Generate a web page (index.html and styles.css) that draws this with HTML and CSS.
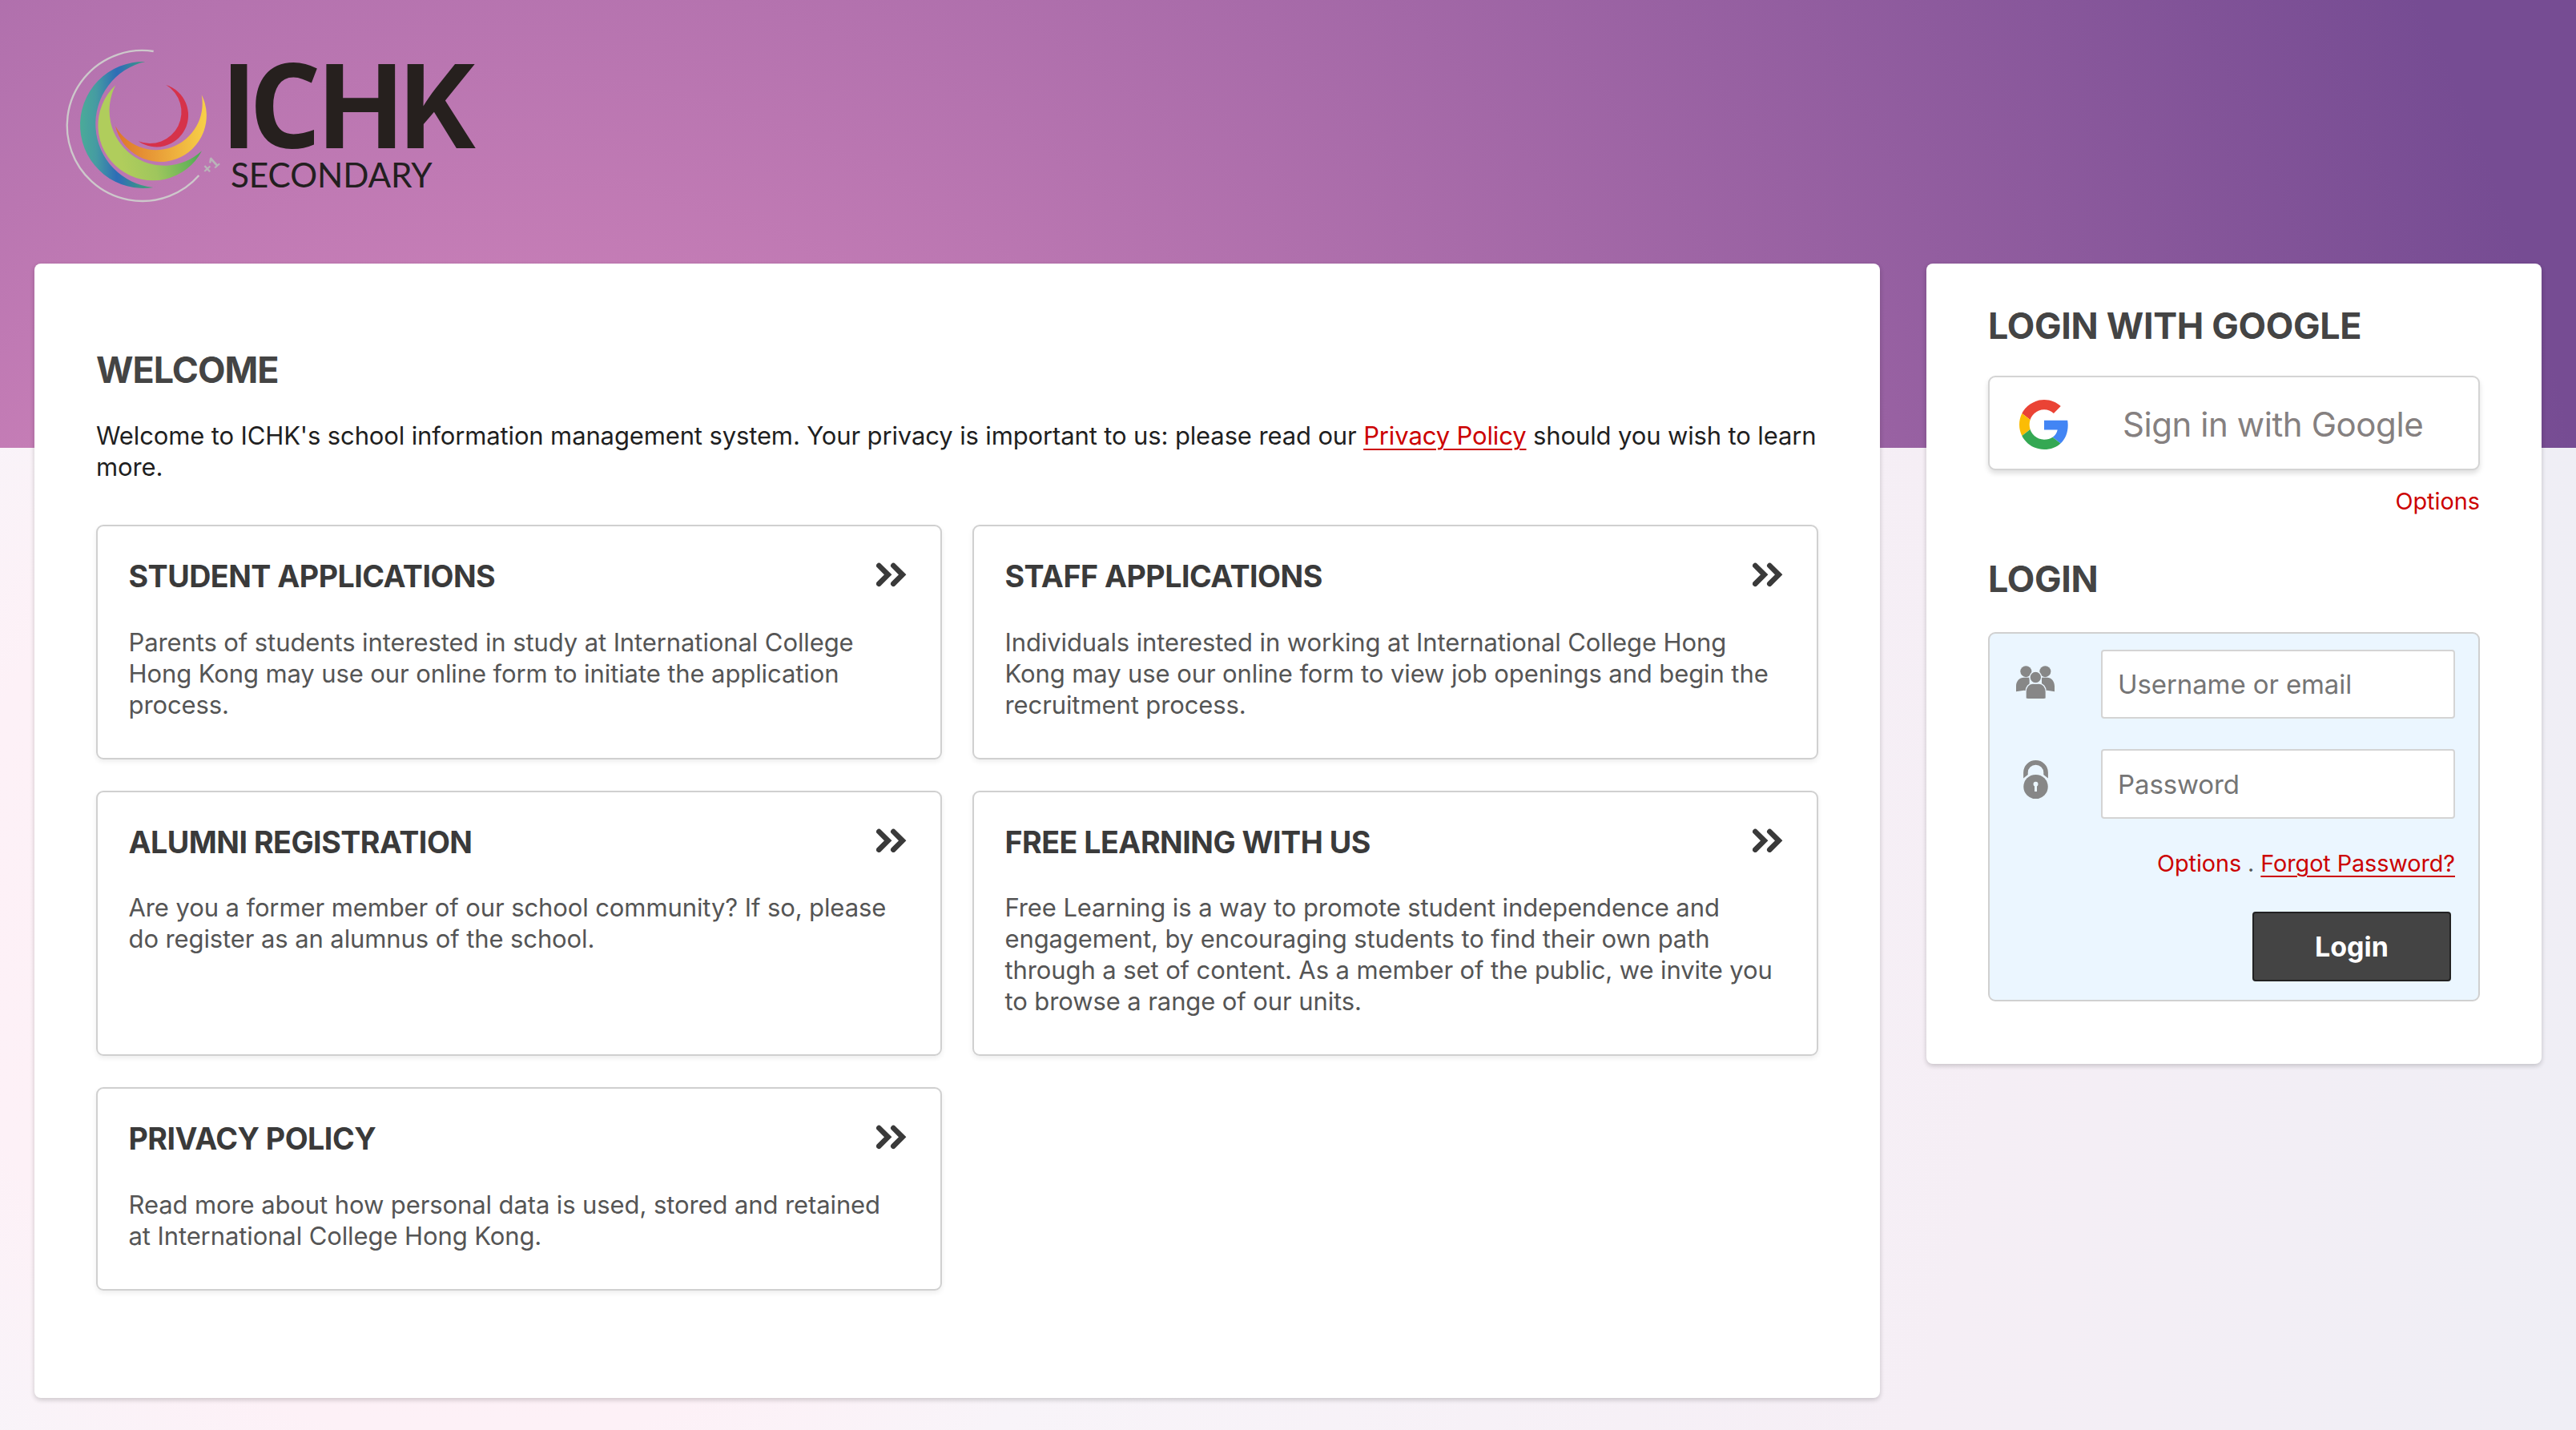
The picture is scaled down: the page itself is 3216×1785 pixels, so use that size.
FILE: index.html
```html
<!DOCTYPE html>
<html lang="en">
<head>
<meta charset="utf-8">
<title>ICHK Secondary</title>
<link rel="stylesheet" href="styles.css">
</head>
<body>
<svg class="defs" aria-hidden="true">
  <defs>
    <symbol id="chevrons" viewBox="100 186 113 92">
      <path d="M110 198l34 34-34 34M164 198l34 34-34 34" fill="none" stroke="currentColor" stroke-width="20" stroke-linecap="round"/>
    </symbol>
  </defs>
</svg>
<div class="page">
  <header class="header">
    <svg class="logo" viewBox="0 0 1620 660" role="img" aria-label="ICHK Secondary">
      <defs>
        <linearGradient id="blue"><stop offset="0" stop-color="#4bab98"/><stop offset=".22" stop-color="#459ba2"/><stop offset=".5" stop-color="#2e6db6"/><stop offset=".55" stop-color="#2f70b4"/><stop offset="1" stop-color="#43a96f"/></linearGradient>
        <linearGradient id="green" x1="0" y1=".7" x2="1" y2=".5"><stop offset="0" stop-color="#b0cd5c"/><stop offset=".2" stop-color="#b0cd5c"/><stop offset=".5" stop-color="#9fc65d"/><stop offset=".85" stop-color="#62b158"/><stop offset="1" stop-color="#3fa055"/></linearGradient>
        <linearGradient id="orange"><stop offset="0" stop-color="#dd742b"/><stop offset="1" stop-color="#f7d048"/></linearGradient>
      </defs>
      <path d="M397 43A282 282 0 1 0 567 508" transform="translate(-2 -1)" fill="none" stroke="#cdc8cb" stroke-width="7"/>
      <path d="M362 81A237 237 0 1 0 392 552A239 239 0 0 1 362 81Z" transform="translate(2 0)" fill="url(#blue)"/>
      <path d="M250 172A206 206 0 1 0 573 418A206 206 0 0 1 250 172Z" transform="translate(3 -3)" fill="url(#green)"/>
      <path d="M252 322A173 173 0 1 0 575 205A174 174 0 0 1 252 322Z" fill="url(#orange)"/>
      <path d="M442 168A119 119 0 1 1 338 379A118 118 0 0 0 442 168Z" fill="#d6324a"/>
      <text class="logo-plus" transform="translate(597 508) rotate(-42)">+1</text>
      <g class="logo-name">
        <text transform="translate(657 404) scale(.95 1)">I</text>
        <text class="logo-c" transform="translate(753 404) scale(.96 1)">C</text>
        <text transform="translate(1015 404) scale(.967 1)">H</text>
        <text transform="translate(1319 404) scale(.94 1)">K</text>
      </g>
      <text class="logo-sub" x="684" y="551" textLength="755" lengthAdjust="spacing">SECONDARY</text>
    </svg>
  </header>
  <div class="columns">
    <main class="panel main">
      <h2 class="heading welcome">WELCOME</h2>
      <p class="intro">Welcome to ICHK's school information management system. Your privacy is important to us: please read our <a class="link" href="#">Privacy Policy</a> should you wish to learn<br>more.</p>
      <div class="cards">
        <a class="card" href="#">
          <div class="card-head"><h3 class="card-title">STUDENT APPLICATIONS</h3><svg class="chevrons"><use href="#chevrons"/></svg></div>
          <p class="card-text">Parents of students interested in study at International College<br>Hong Kong may use our online form to initiate the application<br>process.</p>
        </a>
        <a class="card" href="#">
          <div class="card-head"><h3 class="card-title">STAFF APPLICATIONS</h3><svg class="chevrons"><use href="#chevrons"/></svg></div>
          <p class="card-text">Individuals interested in working at International College Hong<br>Kong may use our online form to view job openings and begin the<br>recruitment process.</p>
        </a>
        <a class="card" href="#">
          <div class="card-head"><h3 class="card-title">ALUMNI REGISTRATION</h3><svg class="chevrons"><use href="#chevrons"/></svg></div>
          <p class="card-text">Are you a former member of our school community? If so, please<br>do register as an alumnus of the school.</p>
        </a>
        <a class="card" href="#">
          <div class="card-head"><h3 class="card-title">FREE LEARNING WITH US</h3><svg class="chevrons"><use href="#chevrons"/></svg></div>
          <p class="card-text">Free Learning is a way to promote student independence and<br>engagement, by encouraging students to find their own path<br>through a set of content. As a member of the public, we invite you<br>to browse a range of our units.</p>
        </a>
        <a class="card" href="#">
          <div class="card-head"><h3 class="card-title">PRIVACY POLICY</h3><svg class="chevrons"><use href="#chevrons"/></svg></div>
          <p class="card-text">Read more about how personal data is used, stored and retained<br>at International College Hong Kong.</p>
        </a>
      </div>
    </main>
    <aside class="panel side">
      <h2 class="heading">LOGIN WITH GOOGLE</h2>
      <button class="google" type="button">
        <svg class="google-icon" viewBox="0 0 48 48">
          <path fill="#ea4335" d="M24 9.5c3.54 0 6.71 1.22 9.21 3.6l6.85-6.85C35.9 2.38 30.47 0 24 0 14.62 0 6.51 5.38 2.56 13.22l7.98 6.19C12.43 13.72 17.74 9.5 24 9.5z"/>
          <path fill="#4285f4" d="M46.98 24.55c0-1.57-.15-3.09-.38-4.55H24v9.02h12.94c-.58 2.96-2.26 5.48-4.78 7.18l7.73 6c4.51-4.18 7.09-10.36 7.09-17.65z"/>
          <path fill="#fbbc05" d="M10.53 28.59c-.48-1.45-.76-2.99-.76-4.59s.27-3.14.76-4.59l-7.98-6.19C.92 16.46 0 20.12 0 24c0 3.88.92 7.54 2.56 10.78l7.97-6.19z"/>
          <path fill="#34a853" d="M24 48c6.48 0 11.93-2.13 15.89-5.81l-7.73-6c-2.15 1.45-4.92 2.3-8.16 2.3-6.26 0-11.57-4.22-13.47-9.91l-7.98 6.19C6.51 42.62 14.62 48 24 48z"/>
        </svg>
        <span class="google-text">Sign in with Google</span>
      </button>
      <div class="options"><a class="plain" href="#">Options</a></div>
      <h2 class="heading login-heading">LOGIN</h2>
      <form class="form">
        <div class="field">
          <svg class="icon users" viewBox="0 0 144 122">
            <g fill="#878787">
              <circle cx="37" cy="21" r="21"/><circle cx="109" cy="21" r="21"/>
              <path d="M0 96V76C0 58 12 44 30 44H50V98L30 92 0 96ZM144 96V76C144 58 132 44 116 44H96V98L116 92 144 96Z"/>
            </g>
            <g fill="#878787" stroke="#ebf6ff" stroke-width="4">
              <path d="M36 122V98C36 78 48 66 62 66H86C100 66 112 78 112 98V122Q104 126 74 126T36 122Z"/>
              <circle cx="73" cy="43" r="22"/>
            </g>
          </svg>
          <input class="input" type="text" placeholder="Username or email">
        </div>
        <div class="field">
          <svg class="icon lock" viewBox="0 0 93 145">
            <path d="M0 68V46a46.500 46 0 0 1 93 0V68L76 54V46a29.500 29 0 0 0-59 0V54Z" fill="#878787"/>
            <circle cx="46.500" cy="100" r="46" fill="#878787"/>
            <circle cx="46.500" cy="90" r="9" fill="#ebf6ff"/><path d="M42 90h9v28h-9z" fill="#ebf6ff"/>
          </svg>
          <input class="input tall" type="password" placeholder="Password">
        </div>
        <div class="form-links"><a class="plain" href="#">Options</a> . <a class="link" href="#">Forgot Password?</a></div>
        <button class="submit" type="button">Login</button>
      </form>
    </aside>
  </div>
</div>
</body>
</html>
```
FILE: styles.css
```css
* { box-sizing: border-box; }

body {
  margin: 0;
  font-family: Inter, "Liberation Sans", sans-serif;
  font-size: 31px;
  line-height: 39px;
  letter-spacing: -0.1px;
  color: #1f1f1f;
}

h2, h3, p { margin: 0; }
a { text-decoration: none; color: inherit; }
.defs { position: absolute; width: 0; height: 0; }

/* A short saturated band over a pale full-height wash, both centred on one point. */
.page {
  height: 1785px;
  overflow: hidden;
  background:
    radial-gradient(circle at 600px 1150px, #e792c5 0, #764c93 2680px) 0 0 / 100% 559px no-repeat,
    radial-gradient(circle at 600px 1150px, #fef0f6 0, #fdf1f7 650px, #f8f4f9 900px, #f5eef5 1900px, #efeef5 2680px);
}

.header { height: 329px; padding: 50px 60px 0; }
.logo { display: block; width: 540px; height: 220px; overflow: visible; }
.logo-plus { font: 900 58px Lato, sans-serif; fill: #b9b5b9; letter-spacing: 0; }
.logo-name { font: 700 432px Inter, sans-serif; fill: #26201e; letter-spacing: 0; }
.logo-c { font: 700 440px "Open Sans", sans-serif; }
.logo-sub { font: 400 127px Lato, sans-serif; fill: #231f20; letter-spacing: 0; }

.columns { display: flex; align-items: flex-start; gap: 58px; padding: 0 43px; }

.panel {
  background: #fff;
  border-radius: 8px;
  box-shadow: 0 2px 6px rgba(0, 0, 0, .12), 0 3px 6px rgba(0, 0, 0, .08);
}
.main { width: 2304px; height: 1416px; padding: 106px 77px 0; }
.side { width: 768px; height: 999px; padding: 51px 77px 0; }

.heading {
  font-size: 44.8px;
  line-height: 54px;
  font-weight: 700;
  letter-spacing: -0.3px;
  color: #444;
}
.welcome { letter-spacing: -1px; }
.intro { margin: 35px 0 53px; white-space: nowrap; letter-spacing: -0.13px; }
.link {
  color: #c00;
  text-decoration: underline;
  text-decoration-thickness: 2px;
  text-underline-offset: 5px;
}
.plain { color: #c00; }

.cards { display: grid; grid-template-columns: 1fr 1fr; gap: 39px 38px; }
.card {
  border: 2px solid #d0d0d0;
  border-radius: 9px;
  padding: 39px 39px 47px 38.500px;
  color: #555;
  box-shadow: 0 3px 6px rgba(0, 0, 0, .07);
}
.card-head { display: flex; justify-content: space-between; height: 48px; margin-bottom: 37.500px; }
.card-title {
  font-size: 37.6px;
  line-height: 48px;
  font-weight: 700;
  letter-spacing: -0.5px;
  color: #3a3a3a;
}
.chevrons { width: 37.700px; height: 30.700px; margin: 6px 3px 0 0; color: #3a3a3a; }
.card-text { white-space: nowrap; }

.google {
  display: flex;
  align-items: center;
  width: 100%;
  height: 118px;
  margin-top: 35px;
  padding: 0 0 0 37px;
  border: 2px solid #d4d4d4;
  border-radius: 9px;
  background: #fff;
  box-shadow: 0 4px 6px rgba(0, 0, 0, .13);
  font-family: inherit;
  gap: 67px;
}
.google-icon { width: 62px; height: 62px; margin-top: 3px; }
.google-text { font-size: 42px; line-height: 50px; letter-spacing: -0.43px; color: #858080; margin-top: 3px; }

.options { margin-top: 19px; text-align: right; font-size: 28.8px; letter-spacing: 0; }
.login-heading { margin: 51px 0 39px; }

.form {
  display: flex;
  flex-direction: column;
  height: 461px;
  padding: 20px 29px 0 33px;
  border: 2px solid #d0d0d0;
  border-radius: 9px;
  background: #ebf6ff;
}
.field { display: flex; justify-content: space-between; margin-bottom: 38px; }
.icon { overflow: hidden; }
.users { width: 48px; height: 41px; margin: 20px 0 0 0; }
.lock { width: 31px; height: 48px; margin: 14px 0 0 9px; }
.input {
  width: 442px;
  height: 86px;
  padding: 0 0 0 19px;
  border: 2px solid #d4d4d4;
  border-radius: 4px;
  background: #fff;
  font: 33px Inter, "Liberation Sans", sans-serif;
  letter-spacing: -0.1px;
}
.input::placeholder { color: #757575; opacity: 1; }
.tall { height: 87px; }
.form-links { margin-top: -2px; text-align: right; font-size: 28.8px; letter-spacing: -0.08px; color: #555; }
.submit {
  align-self: flex-end;
  width: 248px;
  height: 87px;
  margin: 41px 5px 0 0;
  border: 2px solid #222;
  border-radius: 4px;
  background: #444;
  color: #fff;
  font: 700 34px Inter, "Liberation Sans", sans-serif;
}
```
